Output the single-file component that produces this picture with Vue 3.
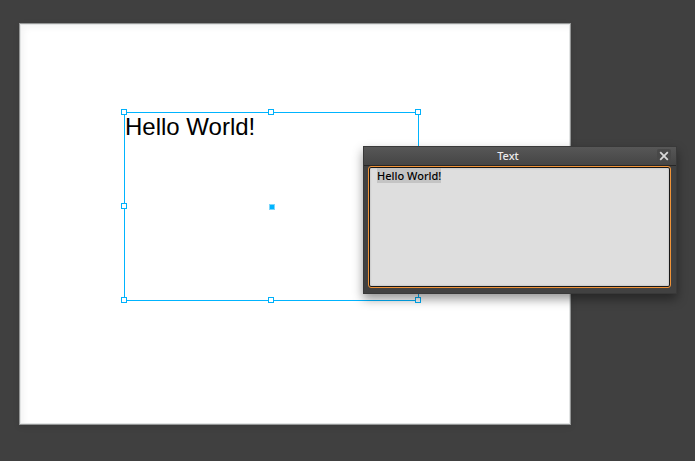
<script setup>
import { ref, onMounted } from 'vue'

const text = ref('Hello World!')
const open = ref(true)
const editor = ref(null)
const handles = ['nw', 'n', 'ne', 'w', 'sw', 's', 'se']

onMounted(() => {
  editor.value.focus()
  editor.value.select()
})
</script>

<template>
  <main class="workspace">
    <section class="sheet">
      <div class="frame">
        <div class="frame-text">{{ text }}</div>
        <span v-for="h in handles" :key="h" class="handle" :class="h"></span>
        <span class="center"></span>
      </div>
    </section>

    <section v-if="open" class="panel">
      <header class="titlebar">
        <label class="title" for="text-editor">Text</label>
        <button class="close" type="button" aria-label="Close" @click="open = false">
          <svg width="10" height="10" viewBox="0 0 10 10">
            <path d="M1.2 1.2L8.8 8.8M8.8 1.2L1.2 8.8" stroke="#d8d8d8" stroke-width="1.8" />
          </svg>
        </button>
      </header>
      <div class="panel-body">
        <textarea id="text-editor" ref="editor" v-model="text" class="editor" spellcheck="false"></textarea>
      </div>
    </section>
  </main>
</template>

<style>
body {
  background: #404040;
}
</style>

<style scoped>
.workspace {
  box-sizing: border-box;
  position: relative;
  display: flex;
  min-height: 100vh;
  padding: 23px 124px 36px 19px;
  background: #404040;
}

.sheet {
  position: relative;
  flex: 1;
  border: 1px solid #949696;
  background: #fff;
  box-shadow: inset 0 0 0 1px #e2e4e4, inset 4px 4px 6px #f5f5f5, 0 2px 6px rgba(0, 0, 0, 0.1);
}

.frame {
  box-sizing: border-box;
  position: absolute;
  left: 104px;
  top: 88px;
  width: 295px;
  height: 189px;
  border: 1px solid #00b4ff;
}

.frame-text {
  color: #000;
  font: 24px/28px "Liberation Sans", Arial, sans-serif;
}

.handle {
  box-sizing: border-box;
  position: absolute;
  width: 6px;
  height: 6px;
  border: 1px solid #00b0fa;
  background: #fff;
}

.nw,
.w,
.sw {
  left: -4px;
}

.n,
.s {
  left: 143px;
}

.ne,
.se {
  right: -3px;
}

.nw,
.n,
.ne {
  top: -4px;
}

.w {
  top: 90px;
}

.sw,
.s,
.se {
  bottom: -3px;
}

.center {
  box-sizing: border-box;
  position: absolute;
  left: 144px;
  top: 91px;
  width: 6px;
  height: 6px;
  border: 1px solid #7cd6fb;
  background: #00b4ff;
}

.panel {
  box-sizing: border-box;
  position: absolute;
  left: 363px;
  top: 146px;
  display: flex;
  flex-direction: column;
  width: 314px;
  height: 148px;
  border: 1px solid #393939;
  background: #414141;
  box-shadow: 0 5px 10px rgba(0, 0, 0, 0.42);
}

.titlebar {
  display: grid;
  grid-template-columns: 1fr 24px;
  align-items: center;
  height: 18px;
  border-bottom: 1px solid #272727;
  background: linear-gradient(#575757, #454545);
}

.title {
  color: #ececec;
  font: 500 11px/18px "Noto Sans", "Open Sans", sans-serif;
  text-align: center;
}

.close {
  display: grid;
  place-items: center;
  width: 14px;
  height: 14px;
  margin-left: 5px;
  padding: 0;
  border: 0;
  border-radius: 2px;
  background: #484848;
}

.panel-body {
  display: flex;
  flex: 1;
  padding: 0 5px 5px 4px;
}

.editor {
  box-sizing: border-box;
  flex: 1;
  min-width: 0;
  margin: 1px;
  padding: 1px 7px;
  border: 1px solid #181818;
  border-radius: 2px;
  outline: 1px solid #f09338;
  background: #dedede;
  box-shadow: inset 0 0 2px #aaa;
  color: #000;
  font: 500 11px/14px "Noto Sans", "Open Sans", sans-serif;
  resize: none;
}

.editor::selection {
  background: #c4c4c4;
  color: #000;
}
</style>
